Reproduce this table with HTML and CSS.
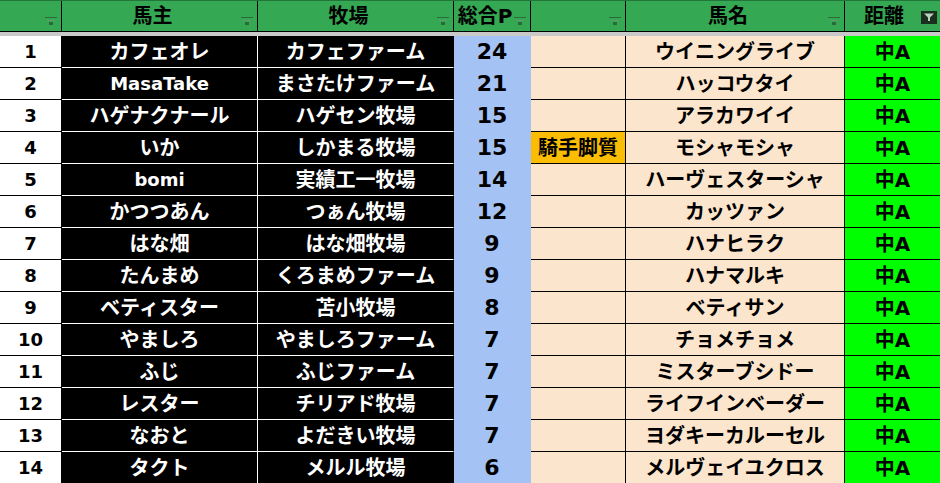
FILE: index.html
```html
<!DOCTYPE html>
<html lang="ja">
<head>
<meta charset="utf-8">
<title>馬主一覧</title>
<link rel="stylesheet" href="styles.css">
</head>
<body>
<div class="sheet">
  <div class="cols hdr">
    <div class="hc"><span class="lbl"></span><svg class="flt" width="12" height="8" viewBox="0 0 12 8"><rect x="0" y="0" width="12" height="1" fill="#2b6a3c"/><rect x="2" y="3" width="8" height="1" fill="#5f9a6e"/><rect x="4" y="5" width="4" height="3" fill="#2b6a3c"/></svg></div>
    <div class="hc"><span class="lbl">馬主</span><svg class="flt" width="12" height="8" viewBox="0 0 12 8"><rect x="0" y="0" width="12" height="1" fill="#2b6a3c"/><rect x="2" y="3" width="8" height="1" fill="#5f9a6e"/><rect x="4" y="5" width="4" height="3" fill="#2b6a3c"/></svg></div>
    <div class="hc"><span class="lbl">牧場</span><svg class="flt" width="12" height="8" viewBox="0 0 12 8"><rect x="0" y="0" width="12" height="1" fill="#2b6a3c"/><rect x="2" y="3" width="8" height="1" fill="#5f9a6e"/><rect x="4" y="5" width="4" height="3" fill="#2b6a3c"/></svg></div>
    <div class="hc"><span class="lbl">総合P</span><svg class="flt" width="12" height="8" viewBox="0 0 12 8"><rect x="0" y="0" width="12" height="1" fill="#2b6a3c"/><rect x="2" y="3" width="8" height="1" fill="#5f9a6e"/><rect x="4" y="5" width="4" height="3" fill="#2b6a3c"/></svg></div>
    <div class="hc"><span class="lbl"></span><svg class="flt" width="12" height="8" viewBox="0 0 12 8"><rect x="0" y="0" width="12" height="1" fill="#2b6a3c"/><rect x="2" y="3" width="8" height="1" fill="#5f9a6e"/><rect x="4" y="5" width="4" height="3" fill="#2b6a3c"/></svg></div>
    <div class="hc"><span class="lbl">馬名</span><svg class="flt" width="12" height="8" viewBox="0 0 12 8"><rect x="0" y="0" width="12" height="1" fill="#2b6a3c"/><rect x="2" y="3" width="8" height="1" fill="#5f9a6e"/><rect x="4" y="5" width="4" height="3" fill="#2b6a3c"/></svg></div>
    <div class="hc last"><span class="lbl">距離</span><span class="aflt"><svg width="12" height="10" viewBox="0 0 12 10"><path d="M1 1.5 H11 L7 5.5 V9 H5 V5.5 Z" fill="#bcd2bf"/></svg></span></div>
  </div>
  <div class="sep"></div>

  <div class="cols row"><div class="c n">1</div><div class="c k">カフェオレ</div><div class="c k">カフェファーム</div><div class="c p">24</div><div class="c e"></div><div class="c e">ウイニングライブ</div><div class="c g">中A</div></div>
  <div class="cols row"><div class="c n">2</div><div class="c k"><span class="lat">MasaTake</span></div><div class="c k">まさたけファーム</div><div class="c p">21</div><div class="c e"></div><div class="c e">ハッコウタイ</div><div class="c g">中A</div></div>
  <div class="cols row"><div class="c n">3</div><div class="c k">ハゲナクナール</div><div class="c k">ハゲセン牧場</div><div class="c p">15</div><div class="c e"></div><div class="c e">アラカワイイ</div><div class="c g">中A</div></div>
  <div class="cols row"><div class="c n">4</div><div class="c k">いか</div><div class="c k">しかまる牧場</div><div class="c p">15</div><div class="c o">騎手脚質</div><div class="c e">モシャモシャ</div><div class="c g">中A</div></div>
  <div class="cols row"><div class="c n">5</div><div class="c k"><span class="lat">bomi</span></div><div class="c k">実績工一牧場</div><div class="c p">14</div><div class="c e"></div><div class="c e">ハーヴェスターシャ</div><div class="c g">中A</div></div>
  <div class="cols row"><div class="c n">6</div><div class="c k">かつつあん</div><div class="c k">つぁん牧場</div><div class="c p">12</div><div class="c e"></div><div class="c e">カッツァン</div><div class="c g">中A</div></div>
  <div class="cols row"><div class="c n">7</div><div class="c k">はな畑</div><div class="c k">はな畑牧場</div><div class="c p">9</div><div class="c e"></div><div class="c e">ハナヒラク</div><div class="c g">中A</div></div>
  <div class="cols row"><div class="c n">8</div><div class="c k">たんまめ</div><div class="c k">くろまめファーム</div><div class="c p">9</div><div class="c e"></div><div class="c e">ハナマルキ</div><div class="c g">中A</div></div>
  <div class="cols row"><div class="c n">9</div><div class="c k">ベティスター</div><div class="c k">苫小牧場</div><div class="c p">8</div><div class="c e"></div><div class="c e">ベティサン</div><div class="c g">中A</div></div>
  <div class="cols row"><div class="c n">10</div><div class="c k">やましろ</div><div class="c k">やましろファーム</div><div class="c p">7</div><div class="c e"></div><div class="c e">チョメチョメ</div><div class="c g">中A</div></div>
  <div class="cols row"><div class="c n">11</div><div class="c k">ふじ</div><div class="c k">ふじファーム</div><div class="c p">7</div><div class="c e"></div><div class="c e">ミスターブシドー</div><div class="c g">中A</div></div>
  <div class="cols row"><div class="c n">12</div><div class="c k">レスター</div><div class="c k">チリアド牧場</div><div class="c p">7</div><div class="c e"></div><div class="c e">ライフインベーダー</div><div class="c g">中A</div></div>
  <div class="cols row"><div class="c n">13</div><div class="c k">なおと</div><div class="c k">よだきい牧場</div><div class="c p">7</div><div class="c e"></div><div class="c e">ヨダキーカルーセル</div><div class="c g">中A</div></div>
  <div class="cols row"><div class="c n">14</div><div class="c k">タクト</div><div class="c k">メルル牧場</div><div class="c p">6</div><div class="c e"></div><div class="c e">メルヴェイユクロス</div><div class="c g">中A</div></div>
</div>
</body>
</html>
```

FILE: styles.css
```css
* {
  box-sizing: border-box;
  margin: 0;
  padding: 0;
}

html, body {
  background: #ffffff;
}

body {
  margin: 0;
  overflow: hidden;
  font-family: "DejaVu Sans", "Noto Sans CJK JP", sans-serif;
  font-weight: 700;
  font-size: 20px;
  color: #000;
}

.sheet {
  width: 940px;
}

.cols {
  display: grid;
  grid-template-columns: 62px 196px 196px 77px 95px 219px 95px;
}

.hdr {
  height: 32px;
  background: #34a853;
  border-top: 1px solid #22763b;
}

.hc {
  display: flex;
  align-items: center;
  border-right: 1px solid #000;
  border-bottom: 1px solid #000;
  line-height: 1;
}

.hc.last {
  border-right: none;
}

.hc .lbl {
  flex: 1;
  text-align: center;
  padding-left: 2px;
}

.flt {
  align-self: flex-end;
  margin: 0 4px 6px 0;
  flex: none;
}

.aflt {
  flex: none;
  width: 16px;
  height: 13px;
  margin-right: 3px;
  margin-top: 2px;
  background: #1a2f1d;
  display: flex;
  align-items: center;
  justify-content: center;
}

.aflt svg {
  display: block;
}

.sep {
  height: 4px;
  background: #c9c9c9;
}

.row {
  height: 32px;
}

.c {
  display: flex;
  align-items: center;
  justify-content: center;
  border-right: 1px solid #000;
  border-bottom: 1px solid #000;
  line-height: 1;
  white-space: nowrap;
}

.c:last-child {
  border-right: none;
}

.n {
  background: #ffffff;
  font-size: 18px;
}

.k {
  background: #000000;
  color: #ffffff;
  border-right-color: #ffffff;
  border-bottom-color: #ffffff;
}

.k + .k {
  border-right-color: #000000;
}

.lat {
  font-size: 18px;
}

.p {
  background: #a4c2f4;
  font-size: 22px;
  border-bottom-color: #a4c2f4;
  border-right-color: #a4c2f4;
}

.e {
  background: #fce5cd;
}

.o {
  background: #fbbc04;
}

.g {
  background: #00ff00;
}
```
